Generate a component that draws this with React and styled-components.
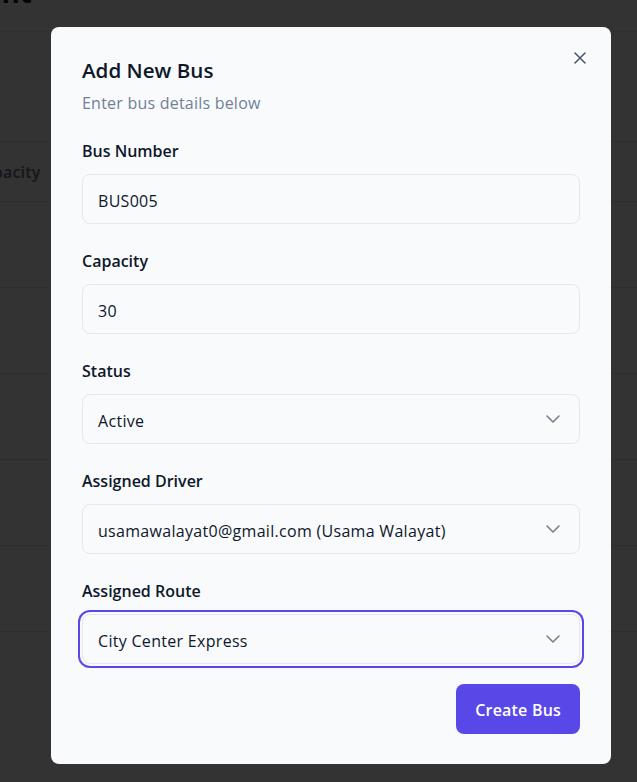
import React from "react";
import styled, { createGlobalStyle } from "styled-components";

const GlobalStyle = createGlobalStyle`
  html, body { margin: 0; padding: 0; background: #ffffff; overflow: hidden; }
  body { font-family: "Open Sans", "Noto Sans", Arial, sans-serif; color: #0f172a; }
  * { box-sizing: border-box; }
`;

const Page = styled.div`
  width: 1100px;
  margin: -24px 0 0 -212px;
`;

const PageTitle = styled.h1`
  margin: 0;
  font-size: 28px;
  line-height: 32px;
  font-weight: 700;
  color: #0f172a;
`;

const Card = styled.div`
  margin-top: 23px;
  border-top: 1px solid #eceef1;
  padding-top: 109px;
`;

const TableHead = styled.div`
  display: grid;
  grid-template-columns: 185px 140px 1fr;
  height: 61px;
  align-items: center;
  border-top: 1px solid #e5e7eb;
  border-bottom: 1px solid #e5e7eb;
  color: #64748b;
  font-size: 16px;
  font-weight: 600;
  letter-spacing: 0.2px;
`;

const TableRow = styled.div`
  height: 86px;
  border-bottom: 1px solid #e5e7eb;
`;

const Overlay = styled.div`
  position: fixed;
  inset: 0;
  background: rgba(0, 0, 0, 0.8);
  padding: 27px 0 0 51px;
`;

const Dialog = styled.div`
  position: relative;
  width: 560px;
  background: #f8fafc;
  border-radius: 8px;
  padding: 31px 31px 30px;
  display: flex;
  flex-direction: column;
`;

const CloseButton = styled.button`
  position: absolute;
  top: 25px;
  right: 25px;
  width: 12px;
  height: 12px;
  padding: 0;
  border: 0;
  background: none;
  display: flex;
  color: #475569;
  cursor: pointer;
`;

const Header = styled.div`
  display: flex;
  flex-direction: column;
  gap: 9px;
  margin-bottom: 24px;
`;

const Title = styled.h2`
  margin: 0;
  font-size: 20.6px;
  line-height: 24px;
  font-weight: 600;
  color: #0f172a;
`;

const Subtitle = styled.p`
  margin: 0;
  font-size: 16px;
  line-height: 24px;
  letter-spacing: 0.22px;
  color: #718096;
`;

const Form = styled.div`
  display: flex;
  flex-direction: column;
  gap: 25px;
`;

const Field = styled.div`
  display: flex;
  flex-direction: column;
  gap: 11px;
`;

const Label = styled.label`
  font-size: 16px;
  line-height: 24px;
  font-weight: 600;
  color: #0f172a;
`;

const Control = styled.div`
  height: 50px;
  border: 1px solid #e3e8f0;
  border-radius: 8px;
  background: #f8fafc;
  display: flex;
  align-items: center;
  justify-content: space-between;
  padding: 3px 14px 0 15px;
  font-size: 16px;
  letter-spacing: 0.3px;
  color: #0f172a;
  box-shadow: ${(p) =>
    p.$focused ? "0 0 0 2px #f8fafc, 0 0 0 4px #5848e8" : "none"};
`;

const Chevron = styled.svg`
  width: 24px;
  height: 24px;
  flex: none;
  margin-top: -3px;
  color: #7a808c;
`;

const Footer = styled.div`
  display: flex;
  justify-content: flex-end;
  margin-top: 20px;
`;

const PrimaryButton = styled.button`
  height: 50px;
  padding: 2px 19px 0;
  border: 0;
  border-radius: 8px;
  background: #5848e8;
  color: #ffffff;
  font-family: inherit;
  font-size: 16px;
  font-weight: 600;
  letter-spacing: 0.2px;
  cursor: pointer;
`;

const ChevronIcon = () => (
  <Chevron viewBox="0 0 24 24" fill="none" stroke="currentColor" strokeWidth="1.6" strokeLinecap="round" strokeLinejoin="round">
    <path d="m6 9 6 6 6-6" />
  </Chevron>
);

const fields = [
  { label: "Bus Number", value: "BUS005" },
  { label: "Capacity", value: "30" },
  { label: "Status", value: "Active", select: true },
  { label: "Assigned Driver", value: "usamawalayat0@gmail.com (Usama Walayat)", select: true },
  { label: "Assigned Route", value: "City Center Express", select: true, focused: true },
];

export default function App() {
  return (
    <>
      <GlobalStyle />
      <Page>
        <PageTitle>Bus Management</PageTitle>
        <Card>
          <TableHead>
            <span>Bus Number</span>
            <span>Capacity</span>
            <span>Status</span>
          </TableHead>
          <TableRow />
          <TableRow />
          <TableRow />
          <TableRow />
          <TableRow />
        </Card>
      </Page>
      <Overlay>
        <Dialog role="dialog">
          <CloseButton aria-label="Close">
            <svg width="12" height="12" viewBox="0 0 12 12" fill="none" stroke="currentColor" strokeWidth="1.5" strokeLinecap="round">
              <path d="M1 1l10 10M11 1L1 11" />
            </svg>
          </CloseButton>
          <Header>
            <Title>Add New Bus</Title>
            <Subtitle>Enter bus details below</Subtitle>
          </Header>
          <Form>
            {fields.map((f) => (
              <Field key={f.label}>
                <Label>{f.label}</Label>
                <Control $focused={f.focused}>
                  <span>{f.value}</span>
                  {f.select && <ChevronIcon />}
                </Control>
              </Field>
            ))}
          </Form>
          <Footer>
            <PrimaryButton>Create Bus</PrimaryButton>
          </Footer>
        </Dialog>
      </Overlay>
    </>
  );
}
